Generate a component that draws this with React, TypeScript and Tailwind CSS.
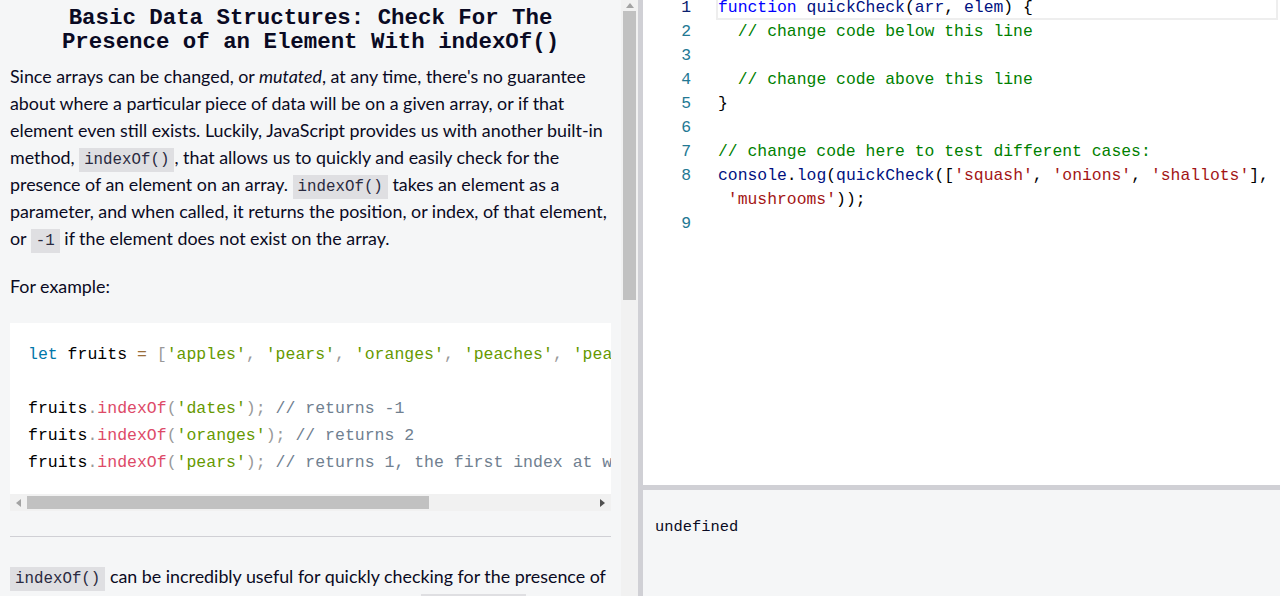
import React from 'react';

const mono = "font-['Liberation_Mono','DejaVu_Sans_Mono',monospace]";

function InlineCode({ children }: { children: React.ReactNode }) {
  return (
    <code className={`${mono} text-[15.8px] leading-none bg-[#dfdfe2] text-[#2a2a40] px-[5px] py-[3px]`}>{children}</code>
  );
}

function Triangle({ dir }: { dir: 'up' | 'left' | 'right' }) {
  const pts = dir === 'up' ? '0,5 4,0 8,5' : dir === 'left' ? '5,0 5,8 0,4' : '0,0 0,8 5,4';
  const w = dir === 'up' ? 8 : 5;
  const h = dir === 'up' ? 5 : 8;
  return (
    <svg width={w} height={h} viewBox={`0 0 ${w} ${h}`}>
      <polygon points={pts} fill={dir === 'right' ? '#505050' : '#a3a3a3'} />
    </svg>
  );
}

function LeftPanel() {
  const p = 'text-[#0a0a23]';
  return (
    <div className="w-[621px] h-full overflow-hidden bg-[#f5f6f7] px-[10px] pt-[6px] font-['Lato','Noto_Sans',sans-serif]">
      <h1 className={`${mono} font-bold text-[22.4px] leading-[24px] text-center text-[#0a0a23] mb-[9px]`}>
        Basic Data Structures: Check For The
        <br />
        Presence of an Element With indexOf()
      </h1>
      <p className={`text-[17.85px] leading-[27px] ${p} mb-[21px]`}>
        Since arrays can be changed, or <em>mutated</em>, at any time, there's no guarantee about where a particular
        piece of data will be on a given array, or if that element even still exists. Luckily, JavaScript provides us
        with another built-in method, <InlineCode>indexOf()</InlineCode>, that allows us to quickly and easily check for
        the presence of an element on an array. <InlineCode>indexOf()</InlineCode> takes an element as a parameter, and
        when called, it returns the position, or index, of that element, or <InlineCode>-1</InlineCode> if the element
        does not exist on the array.
      </p>
      <p className={`text-[17.85px] leading-[27px] ${p} mb-[23px]`}>For example:</p>

      <div className="bg-white">
        <div className={`${mono} text-[16.5px] leading-[27px] text-black whitespace-pre overflow-hidden pl-[18px] py-[18px]`}>
          <div>
            <span className="text-[#0077aa]">let</span> fruits <span className="text-[#9a6e3a]">=</span>{' '}
            <span className="text-[#999999]">[</span>
            <span className="text-[#669900]">'apples'</span>
            <span className="text-[#999999]">,</span> <span className="text-[#669900]">'pears'</span>
            <span className="text-[#999999]">,</span> <span className="text-[#669900]">'oranges'</span>
            <span className="text-[#999999]">,</span> <span className="text-[#669900]">'peaches'</span>
            <span className="text-[#999999]">,</span> <span className="text-[#669900]">'pears'</span>
            <span className="text-[#999999]">];</span>
          </div>
          <div>{' '}</div>
          <div>
            fruits<span className="text-[#999999]">.</span>
            <span className="text-[#dd4a68]">indexOf</span>
            <span className="text-[#999999]">(</span>
            <span className="text-[#669900]">'dates'</span>
            <span className="text-[#999999]">);</span> <span className="text-[#708090]">// returns -1</span>
          </div>
          <div>
            fruits<span className="text-[#999999]">.</span>
            <span className="text-[#dd4a68]">indexOf</span>
            <span className="text-[#999999]">(</span>
            <span className="text-[#669900]">'oranges'</span>
            <span className="text-[#999999]">);</span> <span className="text-[#708090]">// returns 2</span>
          </div>
          <div>
            fruits<span className="text-[#999999]">.</span>
            <span className="text-[#dd4a68]">indexOf</span>
            <span className="text-[#999999]">(</span>
            <span className="text-[#669900]">'pears'</span>
            <span className="text-[#999999]">);</span>{' '}
            <span className="text-[#708090]">// returns 1, the first index at which the element exists</span>
          </div>
        </div>
        <div className="h-[17px] bg-[#f1f1f1] flex items-center">
          <div className="w-[17px] flex items-center justify-center">
            <Triangle dir="left" />
          </div>
          <div className="w-[402px] h-[13px] bg-[#c1c1c1]" />
          <div className="flex-1" />
          <div className="w-[17px] flex items-center justify-center">
            <Triangle dir="right" />
          </div>
        </div>
      </div>

      <hr className="mt-[25px] mb-[26px] border-0 h-px bg-[#d0d0d5]" />

      <p className={`text-[17.85px] leading-[27px] ${p}`}>
        <InlineCode>indexOf()</InlineCode> can be incredibly useful for quickly checking for the presence of an element
        on an array. We have defined a function, <InlineCode>quickCheck</InlineCode>, that takes an array and an element
        as arguments.
      </p>
    </div>
  );
}

function VScroll() {
  return (
    <div className="w-[17px] h-full bg-[#f1f1f1] flex flex-col items-center">
      <div className="h-[11px] flex items-center justify-center">
        <Triangle dir="up" />
      </div>
      <div className="w-[13px] h-[289px] bg-[#c1c1c1]" />
    </div>
  );
}

type Tok = [string, string];

const K = 'text-[#0000ff]';
const I = 'text-[#001080]';
const P = 'text-[#000000]';
const C = 'text-[#008000]';
const S = 'text-[#a31515]';

const lines: { n?: number; toks: Tok[]; active?: boolean }[] = [
  { n: 1, active: true, toks: [[K, 'function'], [P, ' '], [I, 'quickCheck'], [P, '('], [I, 'arr'], [P, ', '], [I, 'elem'], [P, ') {']] },
  { n: 2, toks: [[P, '  '], [C, '// change code below this line']] },
  { n: 3, toks: [] },
  { n: 4, toks: [[P, '  '], [C, '// change code above this line']] },
  { n: 5, toks: [[P, '}']] },
  { n: 6, toks: [] },
  { n: 7, toks: [[C, '// change code here to test different cases:']] },
  { n: 8, toks: [[I, 'console'], [P, '.'], [I, 'log'], [P, '('], [I, 'quickCheck'], [P, '(['], [S, "'squash'"], [P, ', '], [S, "'onions'"], [P, ', '], [S, "'shallots'"], [P, '],']] },
  { toks: [[P, ' '], [S, "'mushrooms'"], [P, '));']] },
  { n: 9, toks: [] },
];

function Editor() {
  return (
    <div className="h-[485px] bg-white overflow-hidden">
      <div className={`${mono} text-[16.4px] leading-[24px] -mt-[4px]`}>
        {lines.map((l, i) => (
          <div key={i} className="flex h-[24px]">
            <div className={`w-[48px] text-right ${l.active ? 'text-[#0b216f]' : 'text-[#237893]'}`}>{l.n ?? ''}</div>
            <div className="w-[27px]" />
            <div
              className={`flex-1 whitespace-pre ${l.active ? 'border-2 border-t-0 border-[#eeeeee] -ml-[2px] mr-[2px]' : ''}`}
            >
              {l.toks.map(([c, t], j) => (
                <span key={j} className={c}>
                  {t}
                </span>
              ))}
            </div>
          </div>
        ))}
      </div>
    </div>
  );
}

export default function App() {
  return (
    <div className="w-[1280px] h-[596px] flex overflow-hidden bg-[#f5f6f7]">
      <LeftPanel />
      <VScroll />
      <div className="w-[5px] h-full bg-[#d0d0d5]" />
      <div className="flex-1 flex flex-col">
        <Editor />
        <div className="h-[5px] bg-[#d0d0d5]" />
        <div className="flex-1 bg-[#f5f6f7] pl-[12px] pt-[25px]">
          <div className={`${mono} text-[15.4px] leading-[24px] text-[#0a0a23]`}>undefined</div>
        </div>
      </div>
    </div>
  );
}
